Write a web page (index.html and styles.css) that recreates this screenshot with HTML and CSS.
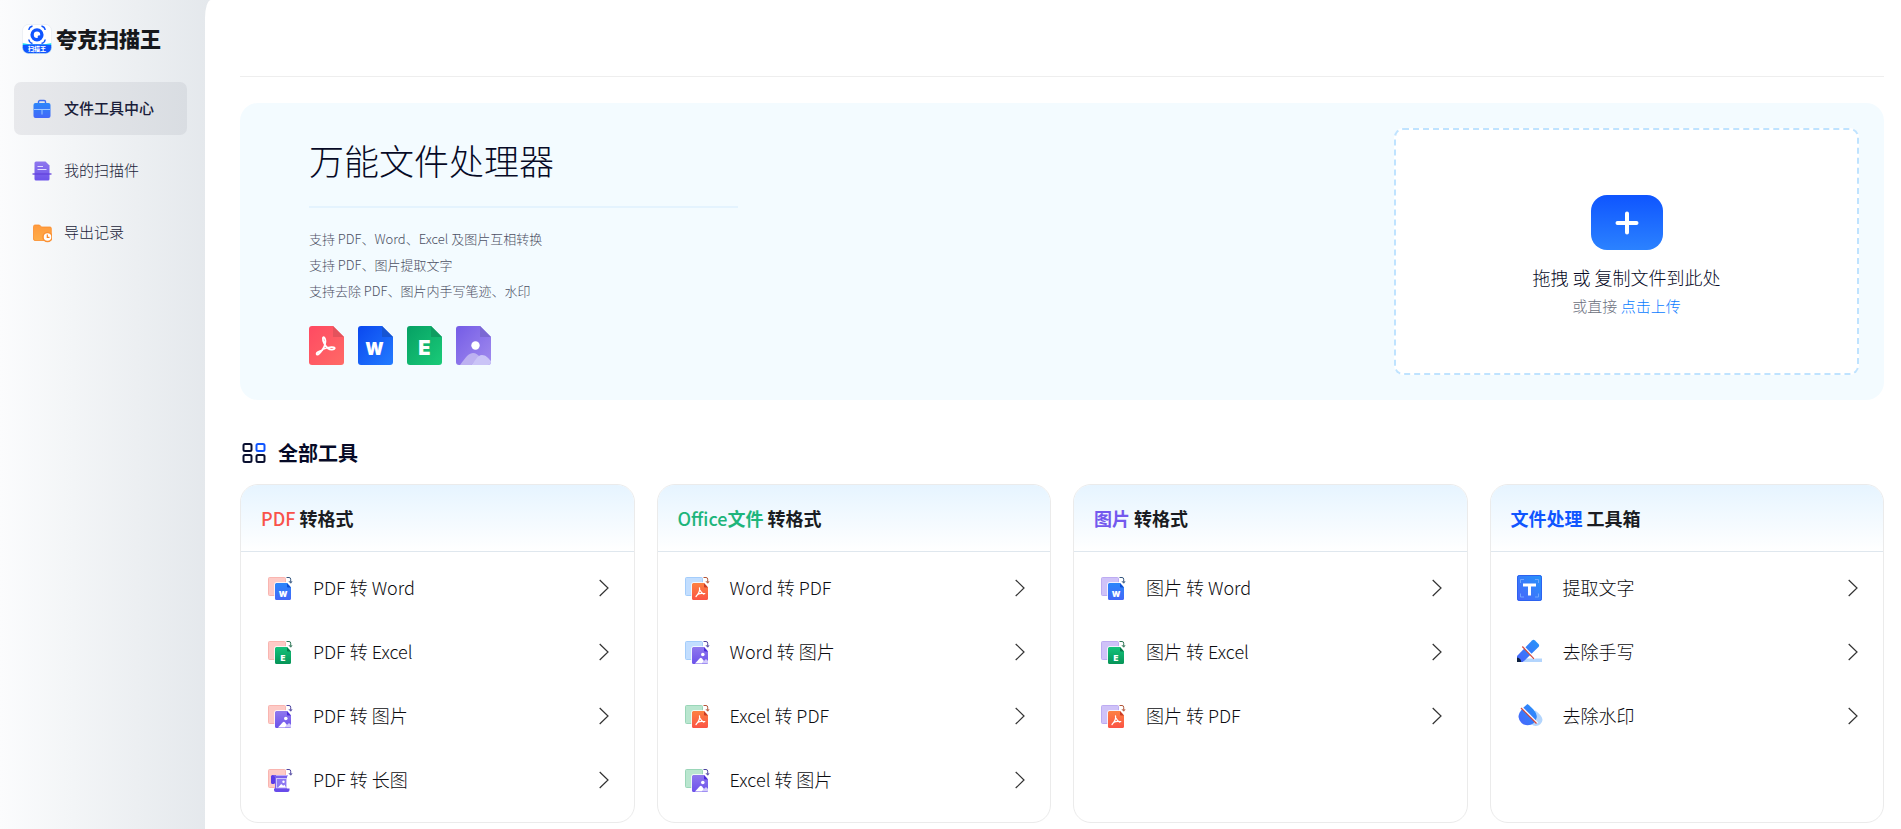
FILE: index.html
```
<!DOCTYPE html>
<html lang="zh-CN">
<head>
<meta charset="utf-8">
<title>夸克扫描王</title>
<meta name="viewport" content="width=device-width, initial-scale=1">
<link rel="stylesheet" href="styles.css">
</head>
<body>
<svg class="defs" aria-hidden="true">
  <defs>
    <linearGradient id="g-red" x1="0" y1="0" x2="1" y2="1"><stop offset="0" stop-color="#ff4a62"/><stop offset="1" stop-color="#ff6a66"/></linearGradient>
    <linearGradient id="g-word" x1="0" y1="0" x2="1" y2="1"><stop offset="0" stop-color="#0a48ef"/><stop offset="1" stop-color="#237bff"/></linearGradient>
    <linearGradient id="g-excel" x1="0" y1="0" x2="1" y2="1"><stop offset="0" stop-color="#06a064"/><stop offset="1" stop-color="#1acb78"/></linearGradient>
    <linearGradient id="g-image" x1="0" y1="0" x2="1" y2="1"><stop offset="0" stop-color="#745ce6"/><stop offset="1" stop-color="#a18bee"/></linearGradient>
    <linearGradient id="g-blue" x1="0" y1="1" x2="1" y2="0"><stop offset="0" stop-color="#4a63fb"/><stop offset="1" stop-color="#2496fa"/></linearGradient>
    <linearGradient id="g-blue2" x1="0" y1="0" x2="0" y2="1"><stop offset="0" stop-color="#2b86fa"/><stop offset="1" stop-color="#4367f8"/></linearGradient>
    <linearGradient id="g-green" x1="0" y1="0" x2="0" y2="1"><stop offset="0" stop-color="#14c37b"/><stop offset="1" stop-color="#069457"/></linearGradient>
    <linearGradient id="g-orange" x1="0" y1="0" x2="0" y2="1"><stop offset="0" stop-color="#fd8142"/><stop offset="1" stop-color="#fb5344"/></linearGradient>
    <linearGradient id="g-violet" x1="0" y1="0" x2="0" y2="1"><stop offset="0" stop-color="#8f78ee"/><stop offset="1" stop-color="#6c52ea"/></linearGradient>
    <linearGradient id="g-folder" x1="0" y1="0" x2="0" y2="1"><stop offset="0" stop-color="#ff9a3e"/><stop offset="1" stop-color="#ffad48"/></linearGradient>

    <path id="acrobat" d="M2 19.500c-1.500-1.200 1.500-3.200 5.200-4.200 2.300-3.800 3.600-7.200 3.200-9.800C10 2.500 8.300 1 7.900 3.200c-.4 3 2.400 8 5.200 10.300 2.400 1.700 6 1.300 6.600-.2.300-1.800-5.500-1.700-12 .9C5.500 17.500 3 20.300 2 19.500z" fill="none" stroke="#fff" stroke-linejoin="round"/>
    <path id="sheet" d="M9.500 8H20l4 4.500V23.500a1.500 1.500 0 0 1-1.500 1.500h-13A1.500 1.500 0 0 1 8 23.500v-14A1.500 1.500 0 0 1 9.500 8z"/>
    <path id="swap" d="M19.500 2.500h2.500a1.700 1.700 0 0 1 1.700 1.700v3.500M22 6.200l1.700 2 1.300-2" fill="none"/>
    <rect id="back" x="1.500" y="2.500" width="17" height="18" rx="1"/>

    <symbol id="to-word" viewBox="0 0 26 26">
      <use href="#sheet" stroke="#fff" stroke-width="1.500"/><use href="#sheet" fill="url(#g-blue2)"/>
      <path d="M20 8l4 4.500h-3.200a.8.800 0 0 1-.8-.8z" fill="#0c4ed4"/>
      <text x="16" y="21.500" text-anchor="middle" class="glyph glyph-s">W</text><use href="#swap" stroke="#35567f"/>
    </symbol>
    <symbol id="to-excel" viewBox="0 0 26 26">
      <use href="#sheet" stroke="#fff" stroke-width="1.500"/><use href="#sheet" fill="url(#g-green)"/>
      <path d="M20 8l4 4.500h-3.200a.8.800 0 0 1-.8-.8z" fill="#067a4a"/>
      <text x="16" y="21.500" text-anchor="middle" class="glyph glyph-s">E</text><use href="#swap" stroke="#2f7555"/>
    </symbol>
    <symbol id="to-image" viewBox="0 0 26 26">
      <use href="#sheet" stroke="#fff" stroke-width="1.500"/><use href="#sheet" fill="url(#g-violet)"/>
      <path d="M20 8l4 4.500h-3.200a.8.800 0 0 1-.8-.8z" fill="#4a2bd8"/>
      <circle cx="18.800" cy="15.500" r="1.800" fill="#fff"/>
      <path d="M18 24.500l3-3.800q1-1 2 0l1 1.300v1.500a1 1 0 0 1-1 1z" fill="#d3cbfb"/>
      <path d="M11 24.500l4.800-5.200q1.200-1 2.200.2l2 2.500-2 2.500z" fill="#fff"/><use href="#swap" stroke="#4f45a0"/>
    </symbol>
    <symbol id="to-pdf" viewBox="0 0 26 26">
      <use href="#sheet" stroke="#fff" stroke-width="1.500"/><use href="#sheet" fill="url(#g-orange)"/>
      <path d="M20 8l4 4.500h-3.200a.8.800 0 0 1-.8-.8z" fill="#c93c26"/>
      <path d="M15.500 12.800c.8 3.200-.8 5.700-3.500 8.700M13.500 19.500c2-1.200 4.500-1.500 7.300-.8M16 15.300c.9 1.700 2.200 3 3.600 3.900" fill="none" stroke="#fff" stroke-width="1.200" stroke-linecap="round"/><use href="#swap" stroke="#b25538"/>
    </symbol>
    <symbol id="to-long" viewBox="0 0 26 26">
      <rect x="4" y="8" width="4" height="9" rx="1.500" fill="#5a3be6"/>
      <path d="M6 8h14.500v1.500H20V22H8V10z" fill="#7a60ec"/>
      <path d="M9 8.500h11" stroke="#b9abf8"/>
      <rect x="9.500" y="11.500" width="10" height="9.500" fill="#8d78f2" stroke="#cfc6fb"/>
      <circle cx="16.500" cy="14.700" r="1.200" fill="#fff"/><path d="M11 20.500l3.200-3.600 2 1.800 1.300-1 1.500 2.800z" fill="#fff"/>
      <path d="M7 21.500h15.500V23a2 2 0 0 1-2 2H9a2 2 0 0 1-2-2z" fill="#684bea"/><use href="#swap" stroke="#4f45a0"/>
    </symbol>
    <symbol id="text-box" viewBox="0 0 26 26">
      <rect width="25" height="26" rx="2.500" fill="url(#g-blue)"/><rect x=".5" y=".5" width="24" height="25" rx="2" fill="none" stroke="#2c62f0"/>
      <path d="M3.500 8V4.500H7M18 4.500h3.500V8M21.500 18.500V22H18M7 22H3.500v-3.500" fill="none" stroke="#6fa6ff"/>
      <path d="M6 8.500h13v3h-5v9h-3v-9H6z" fill="#fff"/>
    </symbol>
    <symbol id="pen" viewBox="0 0 26 26">
      <rect x="7" y="19.500" width="18" height="3.500" fill="#b3d5fd"/>
      <path d="M0 17L15 1.500q1.500-1.300 3 0l3.500 3.600q1.300 1.400 0 2.900L6 23H0z" fill="url(#g-blue)"/>
      <path d="M0 18.500q4 .5 4.300 4.500H0z" fill="#0d2140"/>
      <path d="M6.300 7.200L18 19.700" stroke="#fff" stroke-width="1.800"/><path d="M5.300 7.500L17 19.800" stroke="#d5483c" stroke-width="1.200"/>
    </symbol>
    <symbol id="drop" viewBox="0 0 26 26">
      <path d="M18.500 7.500c3.500 3 7 6 7 9.500a6.800 6.800 0 0 1-13.500 0c0-3.500 4-7 6.500-9.500z" fill="#b3d5fd"/>
      <path d="M10.500 1c4 3.300 9.300 8 9.300 13a9.200 9.200 0 0 1-18.300 0c0-5 5-9.700 9-13z" fill="url(#g-blue)"/>
      <path d="M5 4.500L20.500 20" stroke="#fff" stroke-width="1.600"/><path d="M4 5L19.500 20.500" stroke="#d5483c" stroke-width="1.200"/>
    </symbol>
    <symbol id="chevron" viewBox="0 0 10 18"><path d="M.7 1L9 9 .7 17" fill="none" stroke="#333" stroke-width="1.200"/></symbol>
  </defs>
</svg>

<div class="app">
  <aside class="sidebar">
    <a class="brand" href="#">
      <svg class="brand-logo" viewBox="0 0 30 30" aria-hidden="true">
        <clipPath id="logo-clip"><rect x=".5" y=".5" width="29" height="29" rx="6"/></clipPath>
        <g clip-path="url(#logo-clip)"><rect width="30" height="30" fill="#fff"/><path d="M0 19q15 3 30 0V30H0z" fill="#1fe3f0"/><path d="M0 21q15-1.500 30 0v9H0z" fill="#1055ff"/></g>
        <rect x=".5" y=".5" width="29" height="29" rx="6" fill="none" stroke="#e3e8ef" stroke-width=".6"/>
        <circle cx="15" cy="10.800" r="4.900" fill="none" stroke="#1055ff" stroke-width="3.400"/><circle cx="17.300" cy="13" r="1.700" fill="#1055ff"/>
        <path d="M6.800 6q.5-3.200 3.700-4M19.500 2q3.200.8 3.700 4M6.800 15.500q.5 3.200 3.700 4M19.500 19.500q3.200-.8 3.700-4" fill="none" stroke="#1055ff" stroke-width="1.400"/>
        <text x="15" y="27" text-anchor="middle" class="logo-text">扫描王</text>
      </svg>
      <span class="brand-name">夸克扫描王</span>
    </a>
    <nav class="nav">
      <a class="nav-item is-active" href="#">
        <svg class="nav-icon" viewBox="0 0 20 20" aria-hidden="true"><path d="M6.500 4.500V2.800A1.300 1.300 0 0 1 7.800 1.500h4.400a1.300 1.300 0 0 1 1.300 1.300v1.700" fill="none" stroke="#3c6af2" stroke-width="1.400"/><rect x="1.500" y="4" width="17" height="15" rx="2" fill="url(#g-blue2)"/><path d="M2 10.500h16M10 10.500v5" stroke="#9cc6ff"/></svg>
        <span class="nav-name">文件工具中心</span>
      </a>
      <a class="nav-item" href="#">
        <svg class="nav-icon" viewBox="0 0 20 20" aria-hidden="true"><path d="M4 .5h9.500l4 4V18a1.500 1.500 0 0 1-1.500 1.500H4A1.500 1.500 0 0 1 2.500 18V2A1.500 1.500 0 0 1 4 .5z" fill="url(#g-violet)"/><path d="M5.500 5.500H11M5.500 8.500h9" stroke="#e3dcff" stroke-width="1.200"/><path d="M.5 13h19" stroke="#6341dd" stroke-width="1.300"/></svg>
        <span class="nav-name">我的扫描件</span>
      </a>
      <a class="nav-item" href="#">
        <svg class="nav-icon" viewBox="0 0 20 20" aria-hidden="true"><path d="M3 2h4.500l2 2H18a1.300 1.300 0 0 1 1.300 1.300V16a1.500 1.500 0 0 1-1.500 1.500H3A1.500 1.500 0 0 1 1.500 16V3.500A1.500 1.500 0 0 1 3 2z" fill="url(#g-folder)" stroke="#fb8d2b" stroke-width=".8"/><circle cx="15.500" cy="14" r="4.500" fill="#fff" stroke="#fb9134" stroke-width="1.500"/><path d="M15.300 11.500v2.800h2.200" fill="none" stroke="#fb8522" stroke-width="1.200"/></svg>
        <span class="nav-name">导出记录</span>
      </a>
    </nav>
  </aside>

  <main class="main">
    <header class="topbar"></header>

    <section class="hero">
      <div class="intro">
        <h1 class="intro-title">万能文件处理器</h1>
        <p class="intro-text">支持 PDF、Word、Excel 及图片互相转换</p>
        <p class="intro-text">支持 PDF、图片提取文字</p>
        <p class="intro-text">支持去除 PDF、图片内手写笔迹、水印</p>
        <div class="formats">
          <svg class="format" viewBox="0 0 35 39" aria-hidden="true"><path d="M3 0h21l11 11v25a3 3 0 0 1-3 3H3a3 3 0 0 1-3-3V3a3 3 0 0 1 3-3z" fill="url(#g-red)"/><path d="M24 0l11 11H24z" fill="#e4525c"/><use href="#acrobat" x="6" y="9" stroke-width="1.800"/></svg>
          <svg class="format" viewBox="0 0 35 39" aria-hidden="true"><path d="M3 0h21l11 11v25a3 3 0 0 1-3 3H3a3 3 0 0 1-3-3V3a3 3 0 0 1 3-3z" fill="url(#g-word)"/><path d="M24 0l11 11H24z" fill="#1655d2"/><text x="16.500" y="29" text-anchor="middle" class="glyph glyph-w">W</text></svg>
          <svg class="format" viewBox="0 0 35 39" aria-hidden="true"><path d="M3 0h21l11 11v25a3 3 0 0 1-3 3H3a3 3 0 0 1-3-3V3a3 3 0 0 1 3-3z" fill="url(#g-excel)"/><path d="M24 0l11 11H24z" fill="#0e9c60"/><text x="17.500" y="29" text-anchor="middle" class="glyph glyph-e">E</text></svg>
          <svg class="format" viewBox="0 0 35 39" aria-hidden="true"><path d="M3 0h21l11 11v25a3 3 0 0 1-3 3H3a3 3 0 0 1-3-3V3a3 3 0 0 1 3-3z" fill="url(#g-image)"/><path d="M24 0l11 11H24z" fill="#7b68d3"/><circle cx="19.500" cy="19.500" r="4.200" fill="#fff"/><path d="M4 39c3-3 7-12 13-12 3 0 5 2 7 4l-9 8z" fill="#bdb1f1"/><path d="M15 39c4-3 6-10 11-10 4 0 6 3 9 6v1a3 3 0 0 1-3 3z" fill="#cac4f7"/></svg>
        </div>
      </div>
      <div class="upload">
        <button class="upload-button" type="button" aria-label="上传文件"><svg class="plus" viewBox="0 0 24 24" aria-hidden="true"><path d="M12 2.500v19M2.500 12h19" stroke="#fff" stroke-width="4" stroke-linecap="round"/></svg></button>
        <p class="upload-title">拖拽 或 复制文件到此处</p>
        <p class="upload-hint">或直接 <a href="#">点击上传</a></p>
      </div>
    </section>

    <h2 class="section-title">
      <svg class="grid-icon" viewBox="0 0 24 22" aria-hidden="true" fill="none" stroke="#0a1030" stroke-width="2"><rect x="1.500" y="2" width="8" height="7" rx="1.500"/><rect x="14.500" y="2" width="8" height="7" rx="1.500" stroke="#1055ff"/><rect x="1.500" y="13" width="8" height="7" rx="1.500"/><rect x="14.500" y="13" width="8" height="7" rx="1.500"/></svg>
      <span>全部工具</span>
    </h2>

    <div class="cards">
      <section class="card">
        <h3 class="card-title"><span class="red latin">PDF</span> 转格式</h3>
        <ul class="tools">
          <li><a class="tool" href="#"><svg class="tool-icon" viewBox="0 0 26 26"><use href="#back" class="back-red"/><use href="#to-word"/></svg><span class="tool-name">PDF 转 Word</span><svg class="chevron"><use href="#chevron"/></svg></a></li>
          <li><a class="tool" href="#"><svg class="tool-icon" viewBox="0 0 26 26"><use href="#back" class="back-red"/><use href="#to-excel"/></svg><span class="tool-name">PDF 转 Excel</span><svg class="chevron"><use href="#chevron"/></svg></a></li>
          <li><a class="tool" href="#"><svg class="tool-icon" viewBox="0 0 26 26"><use href="#back" class="back-red"/><use href="#to-image"/></svg><span class="tool-name">PDF 转 图片</span><svg class="chevron"><use href="#chevron"/></svg></a></li>
          <li><a class="tool" href="#"><svg class="tool-icon" viewBox="0 0 26 26"><use href="#back" class="back-red"/><use href="#to-long"/></svg><span class="tool-name">PDF 转 长图</span><svg class="chevron"><use href="#chevron"/></svg></a></li>
        </ul>
      </section>
      <section class="card">
        <h3 class="card-title"><span class="green"><span class="latin">Office</span>文件</span> 转格式</h3>
        <ul class="tools">
          <li><a class="tool" href="#"><svg class="tool-icon" viewBox="0 0 26 26"><use href="#back" class="back-blue"/><use href="#to-pdf"/></svg><span class="tool-name">Word 转 PDF</span><svg class="chevron"><use href="#chevron"/></svg></a></li>
          <li><a class="tool" href="#"><svg class="tool-icon" viewBox="0 0 26 26"><use href="#back" class="back-blue"/><use href="#to-image"/></svg><span class="tool-name">Word 转 图片</span><svg class="chevron"><use href="#chevron"/></svg></a></li>
          <li><a class="tool" href="#"><svg class="tool-icon" viewBox="0 0 26 26"><use href="#back" class="back-green"/><use href="#to-pdf"/></svg><span class="tool-name">Excel 转 PDF</span><svg class="chevron"><use href="#chevron"/></svg></a></li>
          <li><a class="tool" href="#"><svg class="tool-icon" viewBox="0 0 26 26"><use href="#back" class="back-green"/><use href="#to-image"/></svg><span class="tool-name">Excel 转 图片</span><svg class="chevron"><use href="#chevron"/></svg></a></li>
        </ul>
      </section>
      <section class="card">
        <h3 class="card-title"><span class="violet">图片</span> 转格式</h3>
        <ul class="tools">
          <li><a class="tool" href="#"><svg class="tool-icon" viewBox="0 0 26 26"><use href="#back" class="back-violet"/><use href="#to-word"/></svg><span class="tool-name">图片 转 Word</span><svg class="chevron"><use href="#chevron"/></svg></a></li>
          <li><a class="tool" href="#"><svg class="tool-icon" viewBox="0 0 26 26"><use href="#back" class="back-violet"/><use href="#to-excel"/></svg><span class="tool-name">图片 转 Excel</span><svg class="chevron"><use href="#chevron"/></svg></a></li>
          <li><a class="tool" href="#"><svg class="tool-icon" viewBox="0 0 26 26"><use href="#back" class="back-violet"/><use href="#to-pdf"/></svg><span class="tool-name">图片 转 PDF</span><svg class="chevron"><use href="#chevron"/></svg></a></li>
        </ul>
      </section>
      <section class="card">
        <h3 class="card-title"><span class="blue">文件处理</span> 工具箱</h3>
        <ul class="tools">
          <li><a class="tool" href="#"><svg class="tool-icon" viewBox="0 0 26 26"><use href="#text-box"/></svg><span class="tool-name">提取文字</span><svg class="chevron"><use href="#chevron"/></svg></a></li>
          <li><a class="tool" href="#"><svg class="tool-icon" viewBox="0 0 26 26"><use href="#pen"/></svg><span class="tool-name">去除手写</span><svg class="chevron"><use href="#chevron"/></svg></a></li>
          <li><a class="tool" href="#"><svg class="tool-icon" viewBox="0 0 26 26"><use href="#drop"/></svg><span class="tool-name">去除水印</span><svg class="chevron"><use href="#chevron"/></svg></a></li>
        </ul>
      </section>
    </div>
  </main>
</div>
</body>
</html>
```

FILE: styles.css
```
*,
*::before,
*::after {
  box-sizing: border-box;
}

body {
  margin: 0;
  background: #fff;
  color: #0c0c10;
  font-family: "Noto Sans CJK SC", sans-serif;
  font-size: 18px;
  font-weight: 300;
}

h1, h2, h3, p, ul {
  margin: 0;
  padding: 0;
}

a {
  color: inherit;
  text-decoration: none;
}

svg {
  display: block;
  flex: none;
}

.defs {
  position: absolute;
  width: 0;
  height: 0;
}

.app {
  display: flex;
  min-height: 100vh;
  background: linear-gradient(90deg, #fbfcfd 0, #e4e8ec 210px);
}

/* Sidebar */
.sidebar {
  flex: none;
  width: 205px;
  padding: 24px 18px 0 14px;
}

.brand {
  display: flex;
  align-items: center;
  gap: 4px;
  height: 30px;
  margin-bottom: 28px;
  padding-left: 8px;
}

.brand-logo {
  width: 30px;
  height: 30px;
}

.brand-name {
  padding-bottom: 1px;
  color: #16181c;
  font-size: 21px;
  font-weight: 900;
  line-height: 29px;
  white-space: nowrap;
}

.logo-text {
  fill: #fff;
  font-size: 6px;
  font-weight: 900;
}

.nav {
  display: flex;
  flex-direction: column;
  gap: 9px;
}

.nav-item {
  display: flex;
  align-items: center;
  gap: 12px;
  height: 53px;
  padding-left: 18px;
  border-radius: 7px;
  color: #1a1d3a;
  font-size: 15px;
}

.nav-item.is-active {
  background: linear-gradient(90deg, #e8e9ec, #d9dde2);
  font-weight: 500;
}

.nav-icon {
  width: 20px;
  height: 20px;
}

.nav-name {
  padding-bottom: 2px;
}

/* Main column */
.main {
  flex: 1;
  min-width: 0;
  padding: 0 17px 6px 35px;
  border-top-left-radius: 6px 18px;
  background: #fff;
}

.topbar {
  height: 77px;
  border-bottom: 1px solid #eee;
}

.hero {
  display: flex;
  justify-content: space-between;
  margin-top: 26px;
  padding: 25px 25px 25px 69px;
  border-radius: 18px;
  background: #f3fbff;
}

.intro {
  width: 429px;
}

.intro-title {
  margin-bottom: 18px;
  padding: 7px 0 21px;
  border-bottom: 2px solid #e4f3fe;
  color: #060a26;
  font-size: 35px;
  font-weight: 300;
  line-height: 50px;
}

.intro-text {
  color: #4c5064;
  font-size: 13px;
  line-height: 26px;
}

.formats {
  display: flex;
  gap: 14px;
  margin-top: 22px;
}

.format {
  width: 35px;
  height: 39px;
}

.upload {
  display: flex;
  flex-direction: column;
  align-items: center;
  justify-content: center;
  width: 465px;
  height: 247px;
  padding-top: 12px;
  border: 2px dashed #bfe3ff;
  border-radius: 9px;
  background: #fff;
}

.upload-button {
  display: flex;
  align-items: center;
  justify-content: center;
  width: 72px;
  height: 55px;
  margin-bottom: 12px;
  padding: 0;
  border: 0;
  border-radius: 16px;
  background: linear-gradient(#0f55ff, #2b82ff);
}

.plus {
  width: 24px;
  height: 24px;
}

.upload-title {
  color: #060a26;
  line-height: 30px;
}

.upload-hint {
  color: #6c7080;
  font-size: 15px;
  line-height: 28px;
}

.upload-hint a {
  color: #0a7cff;
}

/* Tool cards */
.section-title {
  display: flex;
  align-items: center;
  gap: 12px;
  margin: 38px 0 16px 2px;
  color: #060a26;
  font-size: 20px;
  font-weight: 700;
  line-height: 30px;
}

.grid-icon {
  width: 24px;
  height: 22px;
}

.cards {
  display: grid;
  grid-template-columns: repeat(4, 1fr);
  gap: 22px;
}

.card {
  overflow: hidden;
  border: 1px solid #ebebeb;
  border-radius: 18px;
}

.card-title {
  padding: 0 20px;
  border-bottom: 1px solid #dfe7ee;
  background: linear-gradient(#e6f4ff, #fff);
  color: #1a1c22;
  font-size: 18px;
  font-weight: 700;
  line-height: 66px;
}

.latin { font-weight: 500; }
.red { color: #f9524a; }
.green { color: #1eb57b; }
.violet { color: #7459ee; }
.blue { color: #1055ff; }

.tools {
  padding: 4px 25px 10px 26px;
  list-style: none;
}

.tool {
  display: flex;
  align-items: center;
  gap: 20px;
  height: 64px;
}

.tool-icon {
  width: 26px;
  height: 26px;
}

.tool-name {
  flex: 1;
  padding-bottom: 2px;
}

.chevron {
  width: 10px;
  height: 18px;
}

.glyph {
  fill: #fff;
  font-family: Inter, "Open Sans", sans-serif;
  font-weight: 900;
}

.glyph-s { font-size: 8px; }
.glyph-w { font-size: 17px; }
.glyph-e { font-size: 20px; }

.back-red { fill: #fdcac6; stroke: #f9b5b0; }
.back-blue { fill: #c2deff; stroke: #a4cdfb; }
.back-green { fill: #b9e6cf; stroke: #9ad6b8; }
.back-violet { fill: #cfc2f8; stroke: #bdacf2; }
```
